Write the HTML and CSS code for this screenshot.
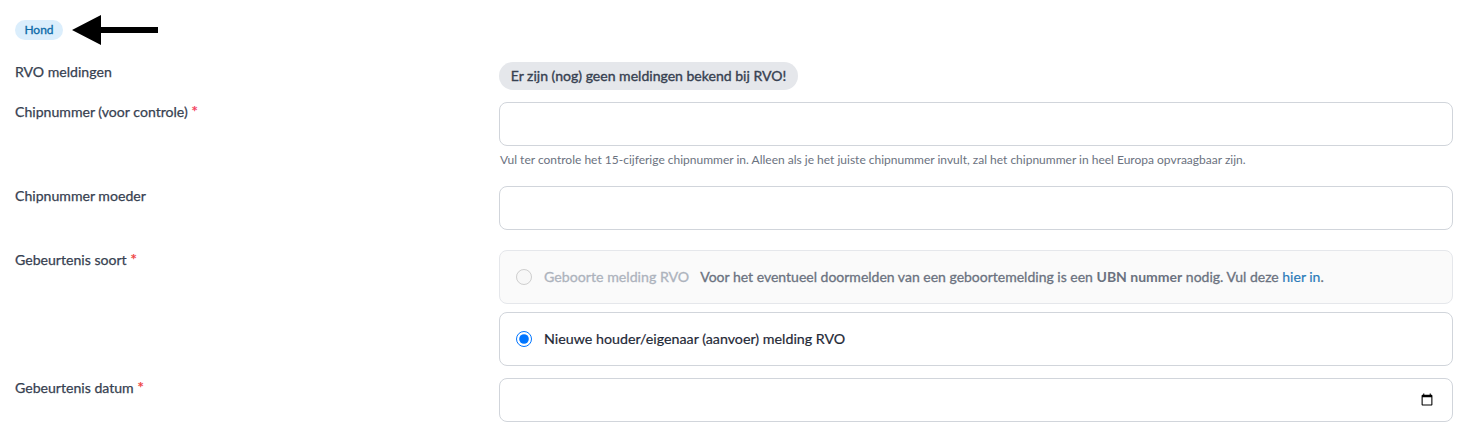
FILE: index.html
```html
<!DOCTYPE html>
<html lang="nl">
<head>
<meta charset="utf-8">
<title>Hond</title>
<link rel="stylesheet" href="styles.css">
</head>
<body>
<div class="head">
  <span class="badge">Hond</span>
  <svg class="arrow" width="86" height="30" viewBox="0 0 86 30"><path d="M0 15 L29 0 V12 H86 V18 H29 V30 Z" fill="#000"/></svg>
</div>
<form class="form">
  <div class="row r-rvo">
    <div class="label">RVO meldingen</div>
    <div class="control"><span class="pill">Er zijn (nog) geen meldingen bekend bij RVO!</span></div>
  </div>
  <div class="row r-chip">
    <label class="label">Chipnummer (voor controle) <span class="req pink">*</span></label>
    <div class="control">
      <input class="input" type="text">
      <p class="help">Vul ter controle het 15-cijferige chipnummer in. Alleen als je het juiste chipnummer invult, zal het chipnummer in heel Europa opvraagbaar zijn.</p>
    </div>
  </div>
  <div class="row r-mother">
    <label class="label">Chipnummer moeder</label>
    <div class="control"><input class="input" type="text"></div>
  </div>
  <div class="row r-kind">
    <div class="label">Gebeurtenis soort <span class="req">*</span></div>
    <div class="control cards">
      <label class="card disabled">
        <input type="radio" name="soort" disabled>
        <span class="dim">Geboorte melding RVO</span>
        <span class="note">Voor het eventueel doormelden van een geboortemelding is een <b>UBN nummer</b> nodig. Vul deze <a href="#">hier in</a>.</span>
      </label>
      <label class="card">
        <input type="radio" name="soort" checked>
        <span class="opt">Nieuwe houder/eigenaar (aanvoer) melding RVO</span>
      </label>
    </div>
  </div>
  <div class="row">
    <label class="label">Gebeurtenis datum <span class="req">*</span></label>
    <div class="control"><input class="input" type="date"></div>
  </div>
</form>
</body>
</html>
```
FILE: styles.css
```css
* { box-sizing: border-box; }
html, body { margin: 0; background: #fff; }
body {
  padding: 15px 8px 0 15px;
  font-family: "Lato", "Liberation Sans", sans-serif;
  font-size: 14px;
  line-height: 20px;
  color: #374151;
  overflow: hidden;
}
.head { display: flex; align-items: center; gap: 10px; height: 30px; }
.badge {
  display: inline-block;
  width: 48px;
  height: 20px;
  margin-right: -1px;
  border-radius: 10px;
  background: #dbeefc;
  color: #0b6aa8;
  font-size: 12px;
  -webkit-text-stroke: 0.3px #0b6aa8;
  line-height: 20px;
  text-align: center;
}
.arrow { display: block; }
.form { display: flex; flex-direction: column; margin-top: 17px; }
.row { display: grid; grid-template-columns: 484px 954px; }
.r-rvo { height: 40px; }
.r-chip { height: 84px; }
.r-mother { height: 64px; }
.r-kind { height: 128px; }
.label { font-size: 14.1px; color: #374151; -webkit-text-stroke: 0.25px #374151; }
.req { color: #ef4444; font-size: 16px; line-height: 14px; -webkit-text-stroke: 0.25px #ef4444; }
.req.pink { color: #f43f5e; -webkit-text-stroke-color: #f43f5e; }
.pill {
  display: inline-block;
  height: 28px;
  width: 299px;
  border-radius: 14px;
  background: #e5e7eb;
  color: #374151;
  font-size: 14.05px;
  -webkit-text-stroke: 0.35px #374151;
  line-height: 28px;
  text-align: center;
}
.input {
  display: block;
  width: 100%;
  height: 44px;
  padding: 0 16px;
  border: 1px solid #d1d5db;
  border-radius: 8px;
  background: #fff;
  font: inherit;
  color: #374151;
}
.input[type="date"] { color: transparent; }
.input[type="date"]::-webkit-calendar-picker-indicator { opacity: 1; }
.help { margin: 6px 0 0 1px; font-size: 12px; line-height: 16px; color: #6b7280; }
.cards { display: flex; flex-direction: column; gap: 8px; }
.card {
  display: flex;
  align-items: center;
  height: 54px;
  padding: 0 16px;
  border: 1px solid #d1d5db;
  border-radius: 8px;
  background: #fff;
}
.card input { width: 16px; height: 16px; margin: 0 12px 0 0; flex: none; }
.card.disabled { background: #fafafa; border-color: #e5e7eb; }
.dim { color: #adb3bd; margin-right: 11px; font-size: 14.2px; -webkit-text-stroke: 0.3px #adb3bd; }
.note { color: #6b7280; font-size: 14px; -webkit-text-stroke: 0.3px #6b7280; }
.note b { font-weight: 700; -webkit-text-stroke: 0; }
.note a { color: #2b7bb9; text-decoration: none; -webkit-text-stroke: 0.2px #2b7bb9; }
.opt { color: #1f2937; font-size: 14.25px; -webkit-text-stroke: 0.2px #1f2937; }
```
